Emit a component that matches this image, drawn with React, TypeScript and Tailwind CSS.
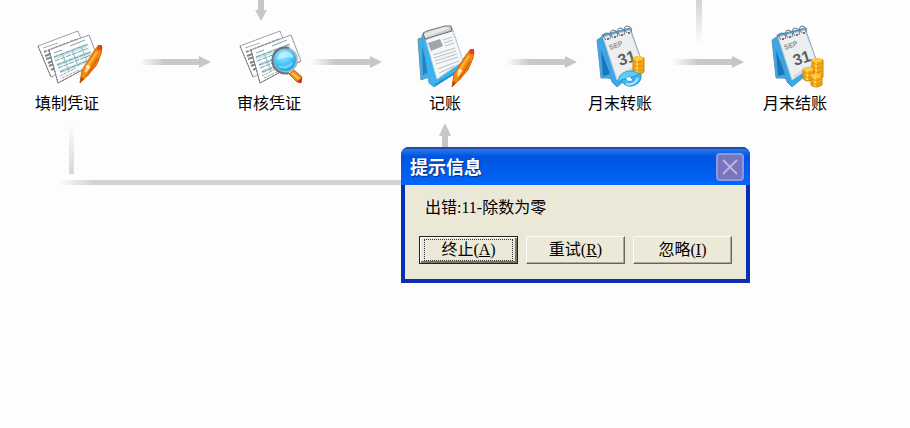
import { useRef, useState } from 'react';
import type { ReactNode } from 'react';

const Pen = () => (
    <g>
        <path d="M1 39 L3 26 L15 7 L19 2 L23 3 L22 10 L17 22 L7 33 Z" fill="#f6880e" stroke="#cf6a12" strokeWidth="1" strokeLinejoin="round" />
        <path d="M6 26 L18 8" stroke="#ffb743" strokeWidth="2" />
        <path d="M8 32 L19 14" stroke="#df640c" strokeWidth="2" />
        <path d="M18 6 L19 1 L23 1 L23 6 Z" fill="#e8401c" />
        <circle cx="9" cy="23" r="2" fill="#f6ecd8" />
        <path d="M6 28 L9 25" stroke="#fbe3bd" strokeWidth="2" />
        <path d="M1 39 L2 33 L5 35 Z" fill="#a8501a" />
    </g>
);

const Sheets = () => (
    <g strokeLinejoin="round">
        <path d="M7 26 L47 11 L58 40 L20 57 Z" fill="#fff" stroke="#9ea2a6" />
        <path d="M7 26 L20 57" stroke="#6f7478" strokeDasharray="2 1" />
        <g stroke="#a9adb0" strokeWidth="1">
            <path d="M12 28 L27 23" />
            <path d="M13 32 L47 19" stroke="#8b9195" strokeWidth="2" strokeDasharray="3 1" />
            <path d="M14 36 L22 33 M15 39 L22 37 M17 43 L22 41 M18 46 L23 44 M20 50 L24 48" stroke="#80868a" strokeWidth="2" />
        </g>
        <path d="M18 30 L58 15 L68 41 L27 63 Z" fill="#fdfefe" stroke="#95999d" />
        <path d="M18 30 L27 63 L68 41" stroke="#6f7478" strokeDasharray="2 1" />
        <g strokeWidth="1">
            <path d="M23 33 L31 30 M39 26 L54 20" stroke="#8b9aa3" />
            <path d="M23 38 L57 25 M26 45 L60 32 M29 52 L56 41" stroke="#c9e2e6" strokeWidth="3" />
            <path d="M23 37 L57 24 M24 41 L58 28 M26 45 L60 32 M27 48 L60 35 M29 52 L56 41" stroke="#6a9fab" strokeDasharray="5 1" />
            <path d="M31 33 L38 51 M41 30 L47 46 M50 26 L56 41" stroke="#8fbac4" />
            <path d="M29 56 L45 48 M31 58 L48 50" stroke="#a2a6aa" strokeDasharray="3 1" />
        </g>
    </g>
);

const Icon = ({ children }: { children: ReactNode }) => (
    <svg width="72" height="71" viewBox="0 0 72 71" fill="none" aria-hidden="true">
        {children}
    </svg>
);

const FillIcon = () => (
    <Icon>
        <Sheets />
        <g transform="translate(48 24)">
            <Pen />
        </g>
    </Icon>
);

const ReviewIcon = () => (
    <Icon>
        <defs>
            <radialGradient id="lens" cx="0.4" cy="0.3" r="0.8">
                <stop offset="0" stopColor="#a6ecff" />
                <stop offset="0.5" stopColor="#46c4f6" />
                <stop offset="1" stopColor="#128fdc" />
            </radialGradient>
        </defs>
        <Sheets />
        <path d="M56 54 L61 50 L69 57 L68 63 L63 61 Z" fill="#ee8b1c" stroke="#c06a22" />
        <path d="M59 53 L66 59" stroke="#ffd04c" strokeWidth="2" />
        <path d="M63 62 L69 58 L68 63 Z" fill="#c92f24" />
        <circle cx="52" cy="40" r="12" fill="url(#lens)" stroke="#a9b6be" strokeWidth="2" />
        <path d="M56 28 A13 13 0 1 0 56 53" stroke="#697178" strokeWidth="2" />
        <path d="M44 40 Q45 32 54 31 Q61 34 60 38 Q52 36 44 40 Z" fill="#c9f4ff" opacity="0.7" />
        <path d="M46 46 Q53 50 59 43" stroke="#6edcfa" strokeWidth="2" />
    </Icon>
);

const BookIcon = () => (
    <Icon>
        <defs>
            <linearGradient id="clip" x1="0" y1="0" x2="1" y2="1">
                <stop offset="0" stopColor="#777" />
                <stop offset="0.4" stopColor="#eee" />
                <stop offset="1" stopColor="#777" />
            </linearGradient>
        </defs>
        <path d="M9 19 L15 17 L28 56 L17 58 L12 60 Z" fill="#3fb0ea" stroke="#6c91a8" />
        <path d="M13 26 L14 55 L20 52 Z" fill="#2280c6" />
        <path d="M13 15 L43 8 L56 47 L25 67 L20 63 Z" fill="#38b4f2" stroke="#5b9cc2" strokeLinejoin="round" />
        <path d="M26 65 L54 48" stroke="#2390d6" strokeWidth="2" />
        <path d="M17 20 L43 9 L54 41 L28 59 Z" fill="#f5f6f7" stroke="#d2d9de" />
        <path d="M19 23 L31 19 L34 26 L22 31 Z" fill="#a2a5a8" />
        <path d="M34 20 L43 17 M35 23 L44 20 M36 26 L45 23 M24 35 L46 28 M25 38 L47 31 M26 41 L48 34 M27 44 L49 37 M29 49 L50 41 M30 53 L46 46" stroke="#bcbfc2" />
        <path d="M14 13 L18 11 L36 6 L42 6 L43 11 L16 19 Z" fill="url(#clip)" stroke="#6f6f6f" strokeLinejoin="round" />
        <path d="M17 15 L39 8" stroke="#e9e9e9" strokeWidth="2" />
        <g transform="translate(42 28)">
            <Pen />
        </g>
    </Icon>
);

const Calendar = () => (
    <g>
        <path d="M13 20 L19 16 L33 61 L24 58 L17 58 Z" fill="#38a8ea" stroke="#6794b2" />
        <path d="M17 30 L19 56 L26 54 Z" fill="#1b74c0" />
        <path d="M18 15 L46 8 L59 45 L33 67 L28 62 Z" fill="#34a9ec" stroke="#5c97bf" strokeLinejoin="round" />
        <path d="M19 17 L46 10 L58 43 L33 60 Z" fill="#eceef0" stroke="#c5cbd0" />
        <path d="M34 57 L56 43" stroke="#d5d8db" strokeWidth="2" />
        <g stroke="#6d757b" strokeWidth="1">
            <path d="M22 20 Q17 14 22 13 Q28 13 26 19" />
            <path d="M29 18 Q24 11 29 10 Q35 11 33 17" />
            <path d="M36 16 Q31 9 36 8 Q42 9 40 15" />
            <path d="M43 13 Q38 7 43 6 Q49 7 47 12" />
        </g>
        <g fill="#3f4a51">
            <circle cx="24" cy="19" r="1" />
            <circle cx="31" cy="17" r="1" />
            <circle cx="38" cy="15" r="1" />
            <circle cx="45" cy="13" r="1" />
        </g>
        <text x="26" y="30" transform="rotate(-20 26 30)" className="font-['Liberation_Sans'] text-[7px] font-bold" fill="#8b8f93">SEP</text>
        <text x="36" y="46" transform="rotate(-18 36 46)" className="font-['Liberation_Sans'] text-[16px] font-bold" fill="#5c6063">31</text>
    </g>
);

const Coins = ({ x, y, h }: { x: number; y: number; h: number }) => (
    <g transform={`translate(${x} ${y})`}>
        <path d={`M0 2 Q5 -1 11 2 V${h - 2} Q5 ${h + 2} 0 ${h - 2} Z`} fill="#f5a910" stroke="#cc8412" />
        <path d={`M4 4 V${h - 1}`} stroke="#ffd45c" strokeWidth="2" />
        {Array.from({ length: Math.floor(h / 5) }, (_, i) => (
            <path key={i} d={`M0 ${5 + i * 4} Q5 ${8 + i * 4} 11 ${5 + i * 4}`} stroke="#dc9412" />
        ))}
        <ellipse cx="5" cy="2" rx="5" ry="2" fill="#ffc943" />
    </g>
);

const TransferIcon = () => (
    <Icon>
        <Calendar />
        <Coins x={49} y={36} h={18} />
        <path d="M34 61 Q36 50 49 51 L56 54 L49 57 Q42 56 41 61 Z" fill="#5fcbf8" stroke="#3aa0dc" />
        <path d="M37 60 Q42 69 51 65 Q58 62 57 54 L46 58 L50 60 Q46 63 42 59 Z" fill="#3fb9f2" stroke="#2a94d4" />
        <path d="M42 64 Q50 66 54 58" stroke="#a4e7ff" strokeWidth="2" />
        <path d="M42 58 L46 57 L48 60 L44 61 Z" fill="#f4fbff" />
    </Icon>
);

const CloseMonthIcon = () => (
    <Icon>
        <Calendar />
        <Coins x={53} y={38} h={21} />
        <Coins x={44} y={47} h={14} />
        <Coins x={52} y={54} h={13} />
    </Icon>
);

const ArrowRight = ({ id, place }: { id: string; place: string }) => (
    <svg width="72" height="14" viewBox="0 0 72 14" className={`absolute ${place}`} aria-hidden="true">
        <defs>
            <linearGradient id={id}>
                <stop offset="0" stopColor="#c9c9c9" stopOpacity="0" />
                <stop offset="0.4" stopColor="#c9c9c9" />
            </linearGradient>
        </defs>
        <rect y="4" width="60" height="6" fill={`url(#${id})`} />
        <path d="M59 1 L71 7 L59 13 Z" fill="#c6c6c6" />
    </svg>
);

const steps = [
    { label: '填制凭证', icon: <FillIcon />, place: 'left-[31px] top-[20px]' },
    { label: '审核凭证', icon: <ReviewIcon />, place: 'left-[233px] top-[20px]' },
    { label: '记账', icon: <BookIcon />, place: 'left-[409px] top-[20px]' },
    { label: '月末转账', icon: <TransferIcon />, place: 'left-[584px] top-[20px]' },
    { label: '月末结账', icon: <CloseMonthIcon />, place: 'left-[759px] top-[20px]' },
];

const arrows = [
    { id: 'arrow-review', place: 'left-[140px] top-[55px]' },
    { id: 'arrow-book', place: 'left-[311px] top-[55px]' },
    { id: 'arrow-transfer', place: 'left-[506px] top-[55px]' },
    { id: 'arrow-close', place: 'left-[673px] top-[55px]' },
];

const actions = [
    { text: '终止', accessKey: 'A' },
    { text: '重试', accessKey: 'R' },
    { text: '忽略', accessKey: 'I' },
];

const ErrorDialog = () => {
    const [selected, setSelected] = useState('A');
    const dialogRef = useRef<HTMLDivElement>(null);

    return (
        <div
            ref={dialogRef}
            role="alertdialog"
            aria-labelledby="dialog-title"
            aria-describedby="dialog-message"
            className="absolute left-[401px] top-[147px] w-[349px] rounded-t-lg bg-[#0a2fb4] overflow-hidden"
        >
            <div className="flex h-[38px] items-center justify-between border-t-2 border-[#1c4ea8] bg-linear-to-b from-[#2a78ea] via-[#0054e0] via-20% to-[#0066fc] pl-[9px] pr-[6px]">
                <h1 id="dialog-title" className="pt-px text-[18px] leading-6 font-bold text-white [text-shadow:1px_1px_1px_#0a2a80]">提示信息</h1>
                <button
                    type="button"
                    aria-label="关闭"
                    className="flex size-7 items-center justify-center rounded border-2 border-[#8a98e4] bg-[#7975bd]"
                >
                    <svg width="18" height="18" viewBox="0 0 18 18" stroke="#b9b5dc" strokeWidth="2" aria-hidden="true">
                        <path d="M2 2 L16 16 M16 2 L2 16" />
                    </svg>
                </button>
            </div>
            <div className="mx-1 mb-1 bg-[#ebe8d7] px-[14px] pt-3 pb-[15px]">
                <p id="dialog-message" className="pl-[6px] text-base leading-[22px]">出错:11-除数为零</p>
                <div className="mt-[17px] flex gap-2">
                    {actions.map((action) => (
                        <button
                            key={action.accessKey}
                            type="button"
                            accessKey={action.accessKey}
                            onClick={() => setSelected(action.accessKey)}
                            className={`h-7 w-[99px] border bg-[#ece9d8] p-[2px] text-base leading-5 outline-none ${
                                selected === action.accessKey
                                    ? 'border-[#222] shadow-[inset_1px_1px_0_#fff,inset_-2px_-2px_0_#77746a]'
                                    : 'border-t-[#fffef6] border-l-[#fffef6] border-r-[#69665c] border-b-[#69665c] shadow-[inset_-1px_-1px_0_#aca899]'
                            }`}
                        >
                            <span
                                className={`flex h-full items-center justify-center border border-dotted ${
                                    selected === action.accessKey ? 'mx-[2px] border-[#333]' : 'border-transparent'
                                }`}
                            >
                                {action.text}(<u>{action.accessKey}</u>)
                            </span>
                        </button>
                    ))}
                </div>
            </div>
        </div>
    );
};

const App = () => {
    return (
        <main className="relative min-h-screen w-full overflow-hidden bg-[#fdfdfd] text-black font-['Liberation_Serif','Noto_Sans_CJK_SC',serif]">
            {/* Connectors */}
            {arrows.map((arrow) => (
                <ArrowRight key={arrow.id} {...arrow} />
            ))}
            <svg width="14" height="21" viewBox="0 0 14 21" fill="#c6c6c6" className="absolute left-[254px] top-0" aria-hidden="true">
                <path d="M4 0 H10 V10 H13 L7 21 L1 10 H4 Z" />
            </svg>
            <div className="absolute left-[696px] top-0 h-11 w-[6px] bg-linear-to-b from-[#d3d3d3] to-transparent" />
            <div className="absolute left-[69px] top-[125px] h-[49px] w-[5px] bg-linear-to-b from-transparent to-[#d6d6d6]" />
            <div className="absolute left-[58px] top-[180px] h-[5px] w-[350px] bg-linear-to-r from-transparent to-[#d3d3d3] to-10%" />
            <svg width="14" height="26" viewBox="0 0 14 26" fill="#c6c6c6" className="absolute left-[438px] top-[123px]" aria-hidden="true">
                <path d="M7 0 L13 13 H10 V26 H4 V13 H1 Z" />
            </svg>

            {/* Process steps */}
            {steps.map((step) => (
                <a key={step.label} href="#" className={`absolute flex w-[72px] flex-col items-center gap-px ${step.place}`}>
                    {step.icon}
                    <span className="text-base leading-6 whitespace-nowrap">{step.label}</span>
                </a>
            ))}

            <ErrorDialog />
        </main>
    );
};

export default App;
